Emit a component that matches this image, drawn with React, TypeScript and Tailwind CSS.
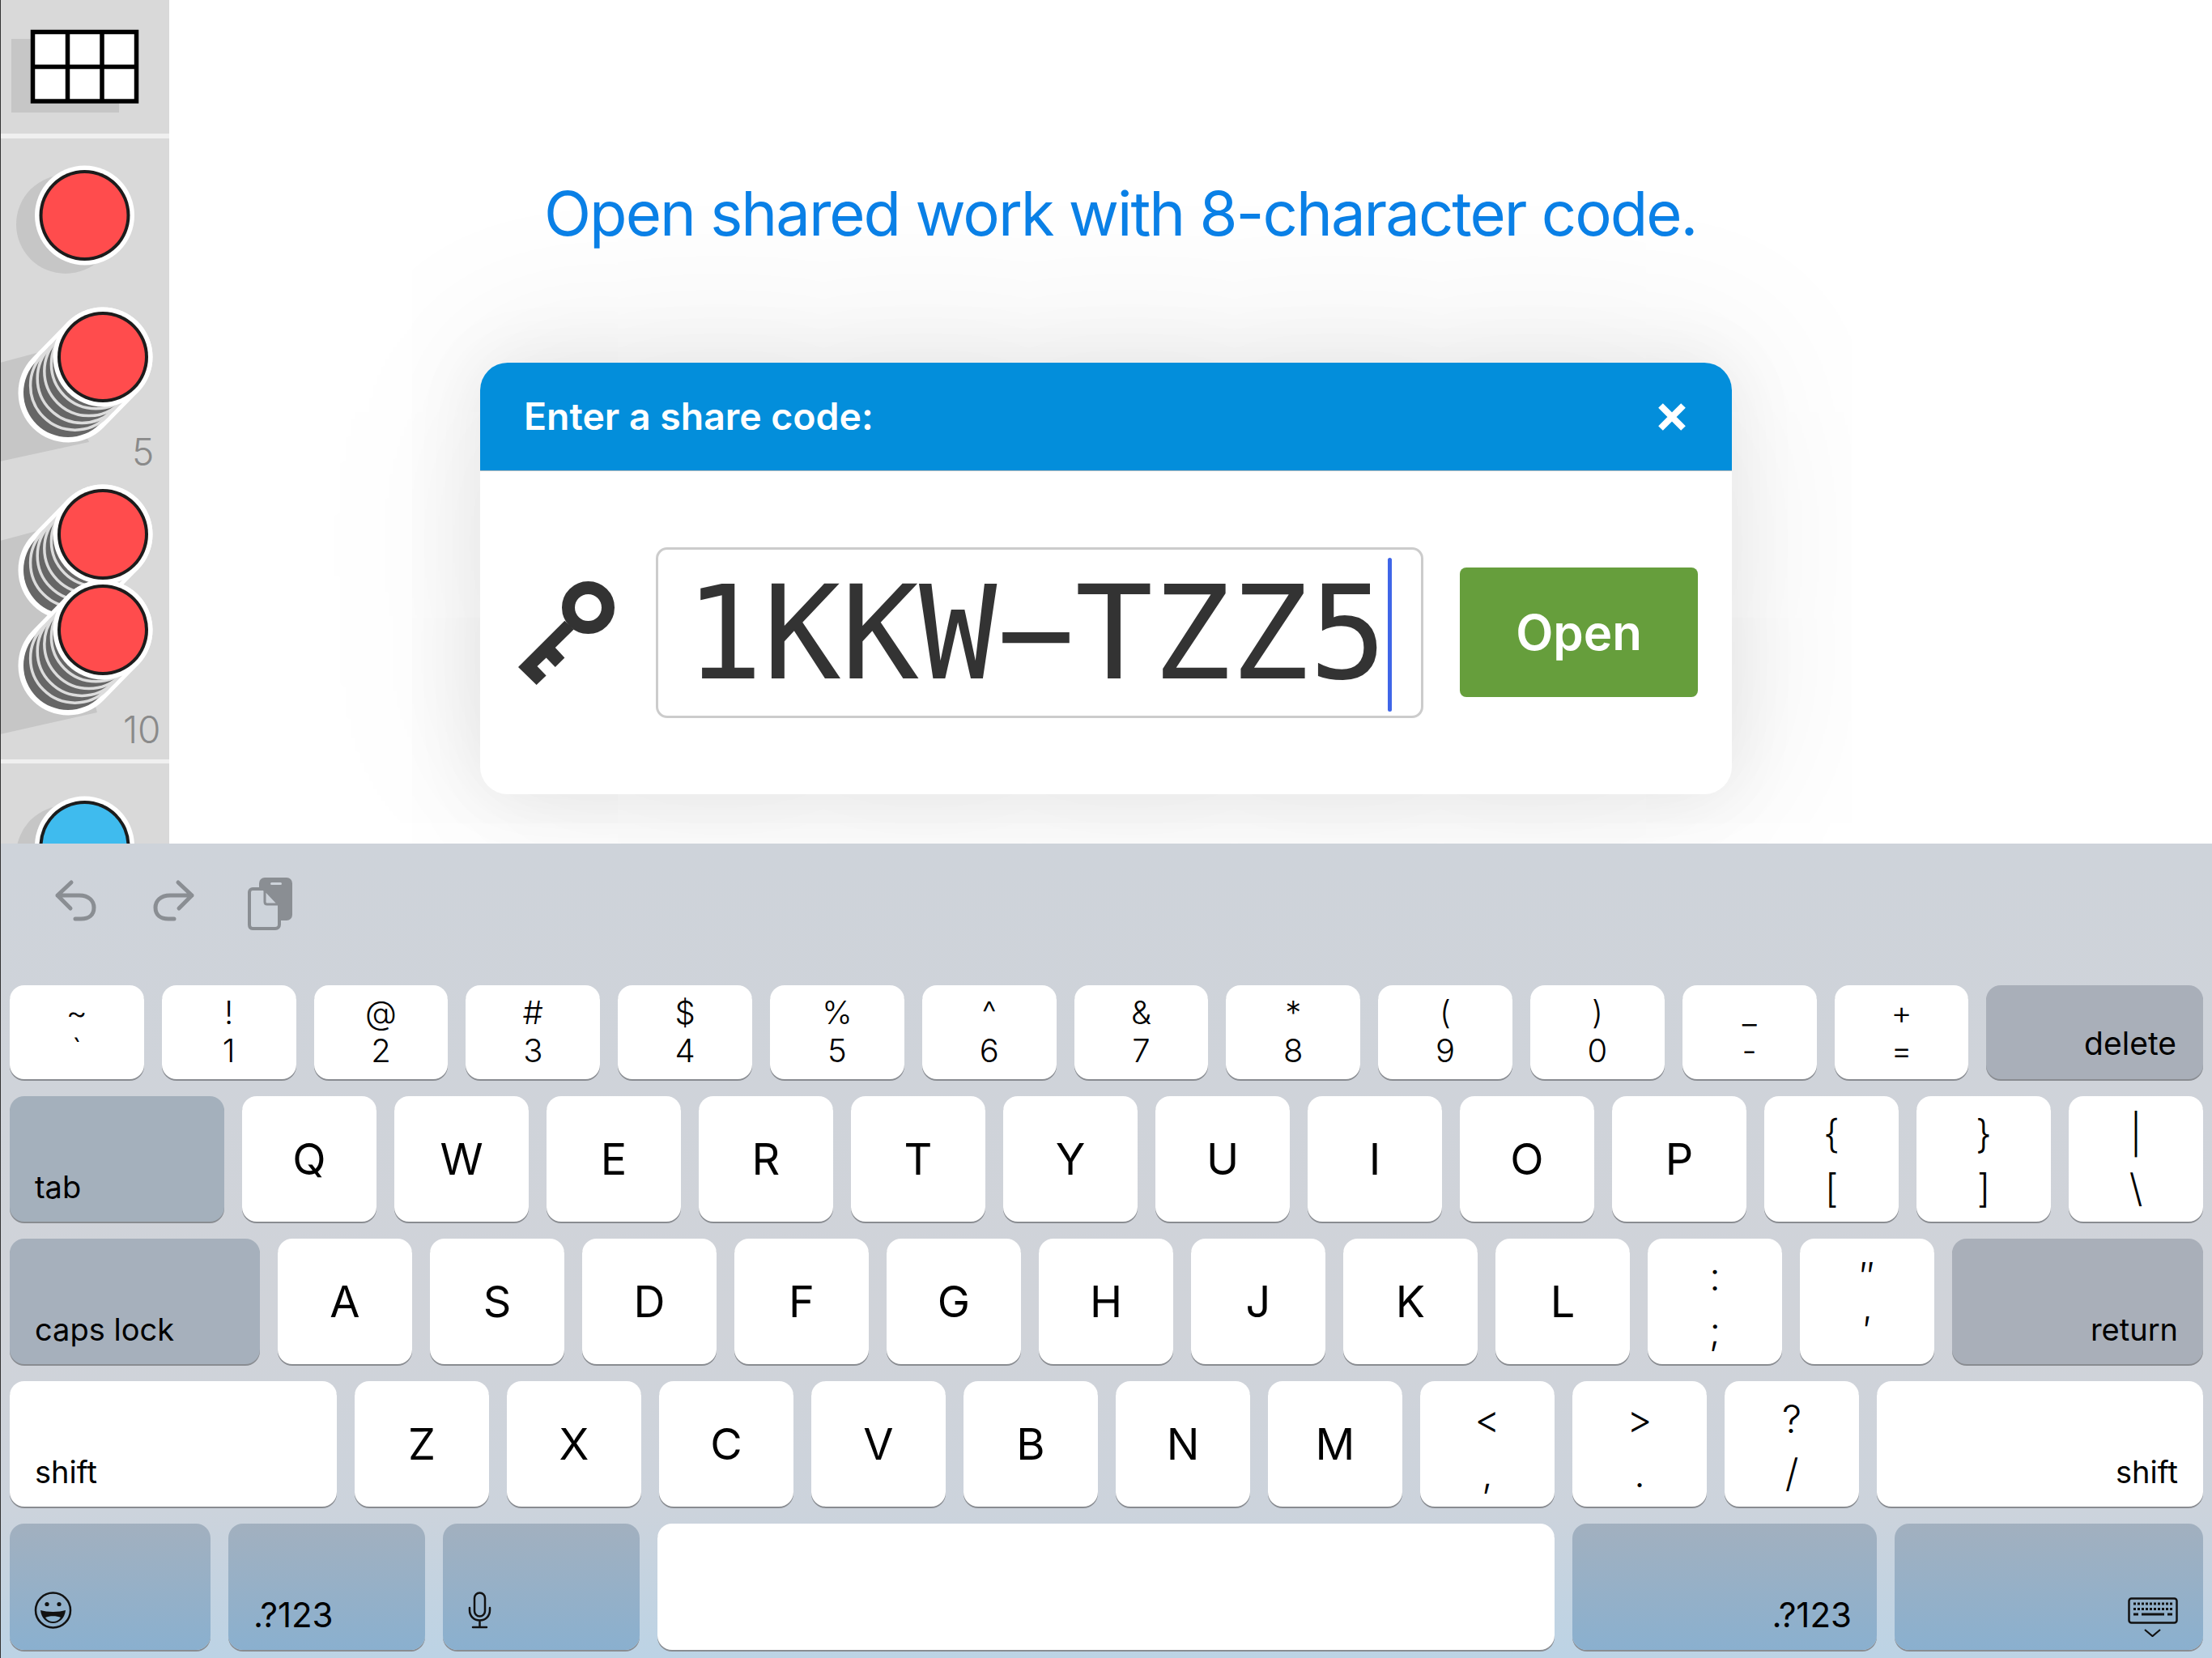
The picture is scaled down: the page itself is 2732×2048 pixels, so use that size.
import React from "react";

const row1: [string, string][] = [["~", "`"], ["!", "1"], ["@", "2"], ["#", "3"], ["$", "4"], ["%", "5"], ["^", "6"], ["&", "7"], ["*", "8"], ["(", "9"], [")", "0"], ["_", "-"], ["+", "="]];
const row2 = ["Q", "W", "E", "R", "T", "Y", "U", "I", "O", "P"];
const row2Symbols: [string, string][] = [["{", "["], ["}", "]"], ["|", "\\"]];
const row3 = ["A", "S", "D", "F", "G", "H", "J", "K", "L"];
const row3Symbols: [string, string][] = [[":", ";"], ["″", "′"]];
const row4 = ["Z", "X", "C", "V", "B", "N", "M"];
const row4Symbols: [string, string][] = [["<", ","], [">", "."], ["?", "/"]];

const keyBase = "h-full rounded-[18px] shadow-[0_2px_0_#898c91] text-black";
const bottomKey = "bg-[linear-gradient(to_bottom,#a2b0bf,#8ab0cf)]";

function NumberKey({ top, bottom }: { top: string; bottom: string }) {
  return (
    <div className={`${keyBase} w-[165.8px] bg-white flex flex-col items-center pt-[10px] text-[40px] leading-[47px] font-light`}>
      <span>{top}</span>
      <span>{bottom}</span>
    </div>
  );
}

function SymbolKey({ top, bottom }: { top: string; bottom: string }) {
  return (
    <div className={`${keyBase} w-[166px] bg-white flex flex-col items-center pt-[13px] text-[48px] leading-[67px] font-light`}>
      <span>{top}</span>
      <span>{bottom}</span>
    </div>
  );
}

function LetterKey({ label }: { label: string }) {
  return (
    <div className={`${keyBase} w-[166px] bg-white flex items-center justify-center text-[54px] font-normal`}>
      {label}
    </div>
  );
}

function WordKey({ label, className }: { label: React.ReactNode; className: string }) {
  return (
    <div className={`${keyBase} flex items-end px-[31px] pb-[21px] text-[38px] leading-[44px] font-normal ${className}`}>
      {label}
    </div>
  );
}

function Chip({ x, y, fill }: { x: number; y: number; fill: string }) {
  return (
    <g>
      <circle cx={x} cy={y} r={61.5} fill="#ffffff" />
      <circle cx={x} cy={y} r={56} fill="#1c1c1c" />
      <circle cx={x} cy={y} r={52} fill={fill} />
    </g>
  );
}

function ChipStack({ y }: { y: number }) {
  const layers = [5, 4, 3, 2, 1];
  return (
    <g>
      <line x1={127} y1={y} x2={84} y2={y + 44} stroke="#ffffff" strokeWidth={123} strokeLinecap="round" />
      {layers.map((i) => (
        <circle key={i} cx={127 - i * 8.6} cy={y + i * 8.8} r={55} fill="#666666" stroke="#dcdcdc" strokeWidth={i === 5 ? 0 : 3.5} />
      ))}
      <Chip x={127} y={y} fill="#ff4c4d" />
    </g>
  );
}

function TableIcon() {
  return (
    <svg width={208} height={165} viewBox="1 0 208 165">
      <rect x={14} y={48} width={133} height={91} fill="#c6c6c6" />
      <rect x={40.5} y={39.5} width={128} height={85.5} fill="#ffffff" stroke="#000000" strokeWidth={5.5} />
      <path d="M83.5 39V125M126 39V125M40 82.5H169" stroke="#000000" strokeWidth={5.5} fill="none" />
    </svg>
  );
}

function ChipsIcon() {
  return (
    <svg width={208} height={767} viewBox="1 171 208 767">
      <circle cx={81} cy={277} r={61} fill="#c6c6c6" />
      <Chip x={104.5} y={266} fill="#ff4c4d" />
      <path d="M0 448L60 432L110 546L0 570Z" fill="#c6c6c6" />
      <ChipStack y={441} />
      <path d="M0 668L60 652L120 880L0 907Z" fill="#c6c6c6" />
      <ChipStack y={660} />
      <ChipStack y={778} />
    </svg>
  );
}

function BlueChip() {
  return (
    <svg width={208} height={100} viewBox="1 943 208 100">
      <circle cx={81} cy={1056} r={61} fill="#c6c6c6" />
      <Chip x={104.5} y={1045} fill="#3fbbee" />
    </svg>
  );
}

function KeyIcon() {
  return (
    <svg width={119} height={128} viewBox="640 717 119 128" className="ml-[47px] shrink-0">
      <circle cx={726.5} cy={749.5} r={24.5} fill="none" stroke="#333333" strokeWidth={16} />
      <path d="M697.4 765.7L640 823L662.6 845L674.6 833.6L663.5 822L674.6 811.4L685.8 823L697.4 811.4L685.8 799L708.6 776.4Z" fill="#333333" />
    </svg>
  );
}

function UndoIcon({ flip }: { flip?: boolean }) {
  return (
    <svg width={54} height={54} viewBox="67 1087 54 54" fill="none" stroke="#8a8e93" strokeWidth={5} strokeLinecap="round" strokeLinejoin="round" className={flip ? "-scale-x-100" : ""}>
      <path d="M88 1091L71 1107L87 1123M71 1107H98C110 1107 116 1114 116 1122C116 1131 110 1136 100 1136H93" />
    </svg>
  );
}

function PasteIcon() {
  return (
    <svg width={57} height={67} viewBox="305 1083 57 67">
      <rect x={320} y={1084} width={41} height={53} rx={7} fill="#8a8e93" />
      <rect x={334} y={1090} width={14} height={3} rx={1.5} fill="#cdd3da" />
      <path d="M312 1098H326L345 1117V1142C345 1145 343 1147 340 1147H312C309 1147 308 1145 308 1142V1102C308 1100 310 1098 312 1098Z" fill="#cdd3da" stroke="#8a8e93" strokeWidth={4} strokeLinejoin="round" />
      <path d="M327 1099V1114C327 1116 328 1117 330 1117H344Z" fill="#cdd3da" stroke="#8a8e93" strokeWidth={3} strokeLinejoin="round" />
    </svg>
  );
}

function SmileIcon() {
  return (
    <svg width={47} height={46} viewBox="0 0 47 46" fill="none" className="-ml-[1px] mb-[5px]">
      <circle cx={23.5} cy={23} r={21.5} stroke="#111111" strokeWidth={2.5} />
      <circle cx={16} cy={15.5} r={2.6} fill="#111111" />
      <circle cx={31} cy={15.5} r={2.6} fill="#111111" />
      <path d="M8 23C16 25.5 31 25.5 39 23C38 33 31 39 23.5 39C16 39 9 33 8 23Z" fill="#111111" />
      <path d="M14 32C19 29.5 28 29.5 33 32C30 36 27 37 23.5 37C20 37 17 36 14 32Z" fill="#8ab0cd" />
    </svg>
  );
}

function MicIcon() {
  return (
    <svg width={29} height={46} viewBox="0 0 29 46" fill="none" stroke="#111111" strokeWidth={2.5} strokeLinecap="round" className="mb-[5px]">
      <rect x={8} y={1.5} width={13} height={29} rx={6.5} />
      <path d="M2 20V23C2 30 7 35.5 14.5 35.5C22 35.5 27 30 27 23V20M14.5 35.5V44M6 44H23" />
    </svg>
  );
}

function KeyboardIcon() {
  return (
    <svg width={62} height={49} viewBox="0 0 62 49" fill="none" className="mb-[-5px] ml-auto">
      <rect x={1.5} y={1.5} width={59} height={30} rx={3} stroke="#111111" strokeWidth={2.5} />
      <path d="M7 8H55M7 14.5H55" stroke="#111111" strokeWidth={3} strokeDasharray="3 2" />
      <path d="M7 21H13M17 21H45M49 21H55" stroke="#111111" strokeWidth={3} />
      <path d="M21 40L30.5 48L40 40" stroke="#111111" strokeWidth={2.2} />
    </svg>
  );
}

export default function App() {
  return (
    <div className="w-[2732px] h-[2048px] overflow-hidden bg-white border-l border-[#333333] font-['Inter',sans-serif]">
      <div className="h-[1042px] flex overflow-hidden">
        <aside className="w-[208px] shrink-0 bg-[#d9d9d9] flex flex-col overflow-hidden relative">
          <div className="h-[165px] shrink-0"><TableIcon /></div>
          <div className="h-[6px] shrink-0 bg-[#f0f0f0]" />
          <div className="h-[767px] shrink-0"><ChipsIcon /></div>
          <div className="h-[5px] shrink-0 bg-[#f0f0f0]" />
          <div className="shrink-0"><BlueChip /></div>
          <span className="absolute left-[162px] top-[530px] text-[46px] leading-[56px] font-light text-[#8a8a8a]">5</span>
          <span className="absolute left-[151px] top-[873px] text-[46px] leading-[56px] font-light text-[#8a8a8a]">10</span>
        </aside>
        <main className="flex-1 flex flex-col">
          <h1 className="mt-[215px] ml-[463px] text-[76px] leading-[96px] tracking-[-2px] font-normal text-[#0a80e6] whitespace-nowrap relative z-10">Open shared work with 8-character code.</h1>
          <section className="mt-[137px] ml-[384px] w-[1546px] h-[533px] rounded-[34px] bg-white shadow-[0_0_90px_rgba(0,0,0,0.07),0_0_230px_rgba(0,0,0,0.1)] overflow-hidden">
            <header className="h-[134px] bg-[#038edb] border-b border-[#b5bcc0] flex items-center justify-between pl-[54px] pr-[57px]">
              <span className="text-[46.4px] font-semibold text-white">Enter a share code:</span>
              <svg width={34} height={34} viewBox="0 0 34 34" stroke="#ffffff" strokeWidth={8}>
                <path d="M3 3L31 31M31 3L3 31" />
              </svg>
            </header>
            <div className="flex items-center pt-[94px]">
              <KeyIcon />
              <div className="ml-[51px] w-[948px] h-[211px] shrink-0 rounded-[14px] border-[3px] border-[#cccccc] flex items-center pl-[33px] pt-[3px] relative font-['DejaVu_Sans_Mono',monospace] text-[160px] text-[#333333]">
                1KKW−TZZ5
                <span className="absolute left-[901px] top-[10px] w-[5px] h-[190px] rounded-full bg-[#3f66e8]" />
              </div>
              <button className="ml-[45px] -mt-[1px] w-[294px] h-[160px] rounded-[8px] bg-[#669e3c] text-[60px] font-semibold text-white">Open</button>
            </div>
          </section>
        </main>
      </div>

      <div className="h-[1006px] pl-[11px] pr-[11px] bg-[linear-gradient(to_bottom,#ced3da_0%,#d0d3d9_60%,#ccd3dc_82%,#bcd3e5_100%)]">
        <div className="h-[175px] flex items-start">
          <div className="ml-[55px] mt-[44px]"><UndoIcon /></div>
          <div className="ml-[66px] mt-[44px]"><UndoIcon flip /></div>
          <div className="ml-[64px] mt-[41px]"><PasteIcon /></div>
        </div>
        <div className="flex flex-col gap-[21px]">
          <div className="h-[116px] flex gap-[22px]">
            {row1.map(([top, bottom]) => <NumberKey key={top} top={top} bottom={bottom} />)}
            <WordKey label="delete" className="flex-1 justify-end bg-[#a9afb9] pb-[22px] pr-[33px] text-[39px]" />
          </div>
          <div className="h-[155px] flex gap-[22px]">
            <WordKey label="tab" className="flex-1 bg-[#a4b0bc]" />
            {row2.map((k) => <LetterKey key={k} label={k} />)}
            {row2Symbols.map(([top, bottom]) => <SymbolKey key={top} top={top} bottom={bottom} />)}
          </div>
          <div className="h-[155px] flex gap-[22px]">
            <WordKey label="caps lock" className="flex-1 bg-[#a6b0bc]" />
            {row3.map((k) => <LetterKey key={k} label={k} />)}
            {row3Symbols.map(([top, bottom]) => <SymbolKey key={top} top={top} bottom={bottom} />)}
            <WordKey label="return" className="w-[310px] justify-end bg-[#a9afb9]" />
          </div>
          <div className="h-[155px] flex gap-[22px]">
            <WordKey label="shift" className="flex-1 bg-white" />
            {row4.map((k) => <LetterKey key={k} label={k} />)}
            {row4Symbols.map(([top, bottom]) => <SymbolKey key={top} top={top} bottom={bottom} />)}
            <WordKey label="shift" className="w-[403px] justify-end bg-white" />
          </div>
          <div className="h-[156px] flex gap-[22px]">
            <WordKey label={<SmileIcon />} className={`w-[248px] ${bottomKey}`} />
            <WordKey label=".?123" className={`w-[243px] text-[42px] ${bottomKey}`} />
            <WordKey label={<MicIcon />} className={`w-[243px] ${bottomKey}`} />
            <div className={`${keyBase} w-[1108px] bg-white`} />
            <WordKey label=".?123" className={`w-[376px] justify-end text-[42px] ${bottomKey}`} />
            <WordKey label={<KeyboardIcon />} className={`flex-1 ${bottomKey}`} />
          </div>
        </div>
      </div>
    </div>
  );
}
